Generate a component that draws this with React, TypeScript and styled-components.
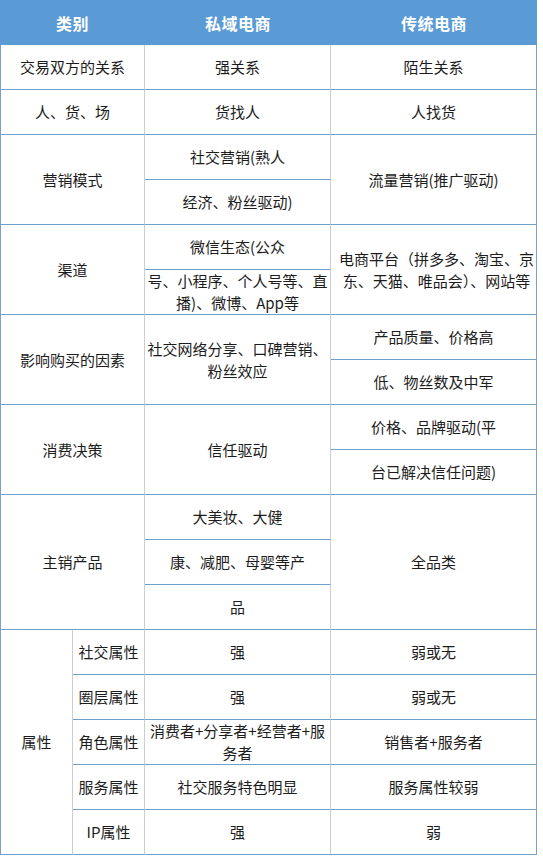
import React from 'react';
import styled, { createGlobalStyle } from 'styled-components';

const Global = createGlobalStyle`
  html, body { margin: 0; padding: 0; background: #ffffff; }
  body { font-family: "Noto Sans CJK SC", "Noto Sans", sans-serif; }
`;

const OUTER = '#7f9fc2';
const HLINE = '#72a0cd';
const VLINE = '#c9ced5';

const Table = styled.div`
  display: grid;
  grid-template-columns: 73px 72px 186px 206px;
  grid-auto-rows: 45px;
  width: 537px;
`;

const HeadCell = styled.div<{ $col: number; $span?: number }>`
  grid-column: ${(p) => p.$col} / span ${(p) => p.$span ?? 1};
  grid-row: 1;
  background: #5b9bd5;
  color: #ffffff;
  font-weight: 700;
  font-size: 16px;
  display: flex;
  align-items: center;
  justify-content: center;
  letter-spacing: 0.5px;
`;

type CellProps = {
  $row: number;
  $col: number;
  $rs?: number;
  $cs?: number;
  $padL?: number;
};

const Cell = styled.div<CellProps>`
  grid-column: ${(p) => p.$col} / span ${(p) => p.$cs ?? 1};
  grid-row: ${(p) => p.$row} / span ${(p) => p.$rs ?? 1};
  box-sizing: border-box;
  display: flex;
  align-items: center;
  justify-content: center;
  text-align: center;
  padding: 0 2px 0 ${(p) => p.$padL ?? 2}px;
  border-bottom: 1px solid ${HLINE};
  border-right: 1px solid ${(p) => (p.$col + (p.$cs ?? 1) - 1 === 4 ? OUTER : VLINE)};
  border-left: ${(p) => (p.$col === 1 ? `1px solid ${OUTER}` : 'none')};
  font-size: 15px;
  line-height: 22px;
  color: #1c1c1c;
  white-space: nowrap;
`;

const Lines = styled.div`
  display: flex;
  flex-direction: column;
  align-items: center;
`;

const Line = styled.span`
  display: block;
`;

type Item = { r: number; c: number; rs?: number; cs?: number; padL?: number; lines: string[] };

const cells: Item[] = [
  { r: 2, c: 1, cs: 2, lines: ['交易双方的关系'] },
  { r: 2, c: 3, lines: ['强关系'] },
  { r: 2, c: 4, lines: ['陌生关系'] },

  { r: 3, c: 1, cs: 2, lines: ['人、货、场'] },
  { r: 3, c: 3, lines: ['货找人'] },
  { r: 3, c: 4, lines: ['人找货'] },

  { r: 4, c: 1, cs: 2, rs: 2, lines: ['营销模式'] },
  { r: 4, c: 3, lines: ['社交营销(熟人'] },
  { r: 5, c: 3, lines: ['经济、粉丝驱动)'] },
  { r: 4, c: 4, rs: 2, lines: ['流量营销(推广驱动)'] },

  { r: 6, c: 1, cs: 2, rs: 2, lines: ['渠道'] },
  { r: 6, c: 3, lines: ['微信生态(公众'] },
  { r: 7, c: 3, lines: ['号、小程序、个人号等、直', '播)、微博、App等'] },
  { r: 6, c: 4, rs: 2, padL: 8, lines: ['电商平台（拼多多、淘宝、京', '东、天猫、唯品会）、网站等'] },

  { r: 8, c: 1, cs: 2, rs: 2, lines: ['影响购买的因素'] },
  { r: 8, c: 3, rs: 2, lines: ['社交网络分享、口碑营销、', '粉丝效应'] },
  { r: 8, c: 4, lines: ['产品质量、价格高'] },
  { r: 9, c: 4, lines: ['低、物丝数及中军'] },

  { r: 10, c: 1, cs: 2, rs: 2, lines: ['消费决策'] },
  { r: 10, c: 3, rs: 2, lines: ['信任驱动'] },
  { r: 10, c: 4, lines: ['价格、品牌驱动(平'] },
  { r: 11, c: 4, lines: ['台已解决信任问题)'] },

  { r: 12, c: 1, cs: 2, rs: 3, lines: ['主销产品'] },
  { r: 12, c: 3, lines: ['大美妆、大健'] },
  { r: 13, c: 3, lines: ['康、减肥、母婴等产'] },
  { r: 14, c: 3, lines: ['品'] },
  { r: 12, c: 4, rs: 3, lines: ['全品类'] },

  { r: 15, c: 1, rs: 5, lines: ['属性'] },
  { r: 15, c: 2, lines: ['社交属性'] },
  { r: 15, c: 3, lines: ['强'] },
  { r: 15, c: 4, lines: ['弱或无'] },
  { r: 16, c: 2, lines: ['圈层属性'] },
  { r: 16, c: 3, lines: ['强'] },
  { r: 16, c: 4, lines: ['弱或无'] },
  { r: 17, c: 2, lines: ['角色属性'] },
  { r: 17, c: 3, lines: ['消费者+分享者+经营者+服', '务者'] },
  { r: 17, c: 4, lines: ['销售者+服务者'] },
  { r: 18, c: 2, lines: ['服务属性'] },
  { r: 18, c: 3, lines: ['社交服务特色明显'] },
  { r: 18, c: 4, lines: ['服务属性较弱'] },
  { r: 19, c: 2, lines: ['IP属性'] },
  { r: 19, c: 3, lines: ['强'] },
  { r: 19, c: 4, lines: ['弱'] },
];

export default function App() {
  return (
    <>
      <Global />
      <Table>
        <HeadCell $col={1} $span={2}>类别</HeadCell>
        <HeadCell $col={3}>私域电商</HeadCell>
        <HeadCell $col={4}>传统电商</HeadCell>
        {cells.map((it, i) => (
          <Cell key={i} $row={it.r} $col={it.c} $rs={it.rs} $cs={it.cs} $padL={it.padL}>
            <Lines>
              {it.lines.map((l, j) => (
                <Line key={j}>{l}</Line>
              ))}
            </Lines>
          </Cell>
        ))}
      </Table>
    </>
  );
}
